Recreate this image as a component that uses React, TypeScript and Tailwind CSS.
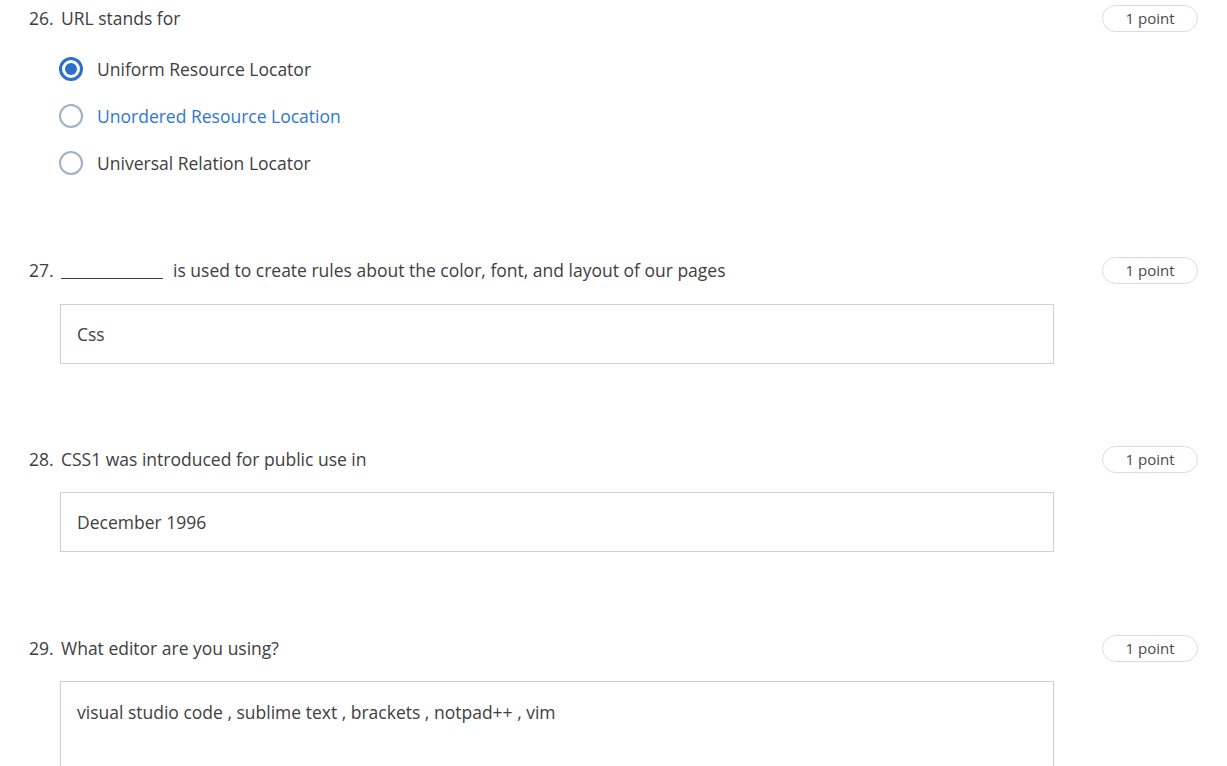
import React from "react";

const font = { fontFamily: '"Open Sans", "Noto Sans", sans-serif' };

function Badge() {
  return (
    <div className="shrink-0 w-[96px] h-[27px] rounded-full border border-[#dcdcdc] flex items-center justify-center text-[15px] text-[#4a4a4a]">
      1 point
    </div>
  );
}

function Radio({ checked }: { checked?: boolean }) {
  return checked ? (
    <div className="w-[24px] h-[24px] rounded-full border-[3px] border-[#2b6fcf] flex items-center justify-center">
      <div className="w-[12px] h-[12px] rounded-full bg-[#2b6fcf]" />
    </div>
  ) : (
    <div className="w-[24px] h-[24px] rounded-full border-2 border-[#9fb0c8]" />
  );
}

function Header({ num, children }: { num: string; children: React.ReactNode }) {
  return (
    <div className="flex items-center justify-between">
      <div className="flex items-center text-[#404040]">
        <span className="w-[32px]">{num}</span>
        <span>{children}</span>
      </div>
      <Badge />
    </div>
  );
}

function Box({ text, tall }: { text: string; tall?: boolean }) {
  return (
    <div className={`ml-[31px] w-[994px] border border-[#cfcfd6] ${tall ? "h-[100px] pt-[18px]" : "h-[60px] flex items-center"} px-[16px] text-[#404040]`}>
      {text}
    </div>
  );
}

export default function App() {
  return (
    <div className="w-[1227px] h-[766px] overflow-hidden bg-white text-[17.5px] leading-[25px]" style={font}>
      <div className="pl-[29px] pr-[29px] pt-[5px]">
        <Header num="26.">URL stands for</Header>
        <div className="ml-[30px] mt-[25px] flex flex-col gap-[23px]">
          <div className="h-[24px] flex items-center gap-[14px] text-[#404040]">
            <Radio checked />
            <span>Uniform Resource Locator</span>
          </div>
          <div className="h-[24px] flex items-center gap-[14px] text-[#2f77d2]">
            <Radio />
            <span>Unordered Resource Location</span>
          </div>
          <div className="h-[24px] flex items-center gap-[14px] text-[#404040]">
            <Radio />
            <span>Universal Relation Locator</span>
          </div>
        </div>

        <div className="mt-[82px]">
          <Header num="27.">
            <span className="inline-block w-[102px] border-b border-[#404040] h-[14px] mr-[10px] align-middle" />
            is used to create rules about the color, font, and layout of our pages
          </Header>
        </div>
        <div className="mt-[20px]">
          <Box text="Css" />
        </div>

        <div className="mt-[82px]">
          <Header num="28.">CSS1 was introduced for public use in</Header>
        </div>
        <div className="mt-[19px]">
          <Box text="December 1996" />
        </div>

        <div className="mt-[83px]">
          <Header num="29.">What editor are you using?</Header>
        </div>
        <div className="mt-[19px]">
          <Box text="visual studio code , sublime text , brackets , notpad++ , vim" tall />
        </div>
      </div>
    </div>
  );
}
